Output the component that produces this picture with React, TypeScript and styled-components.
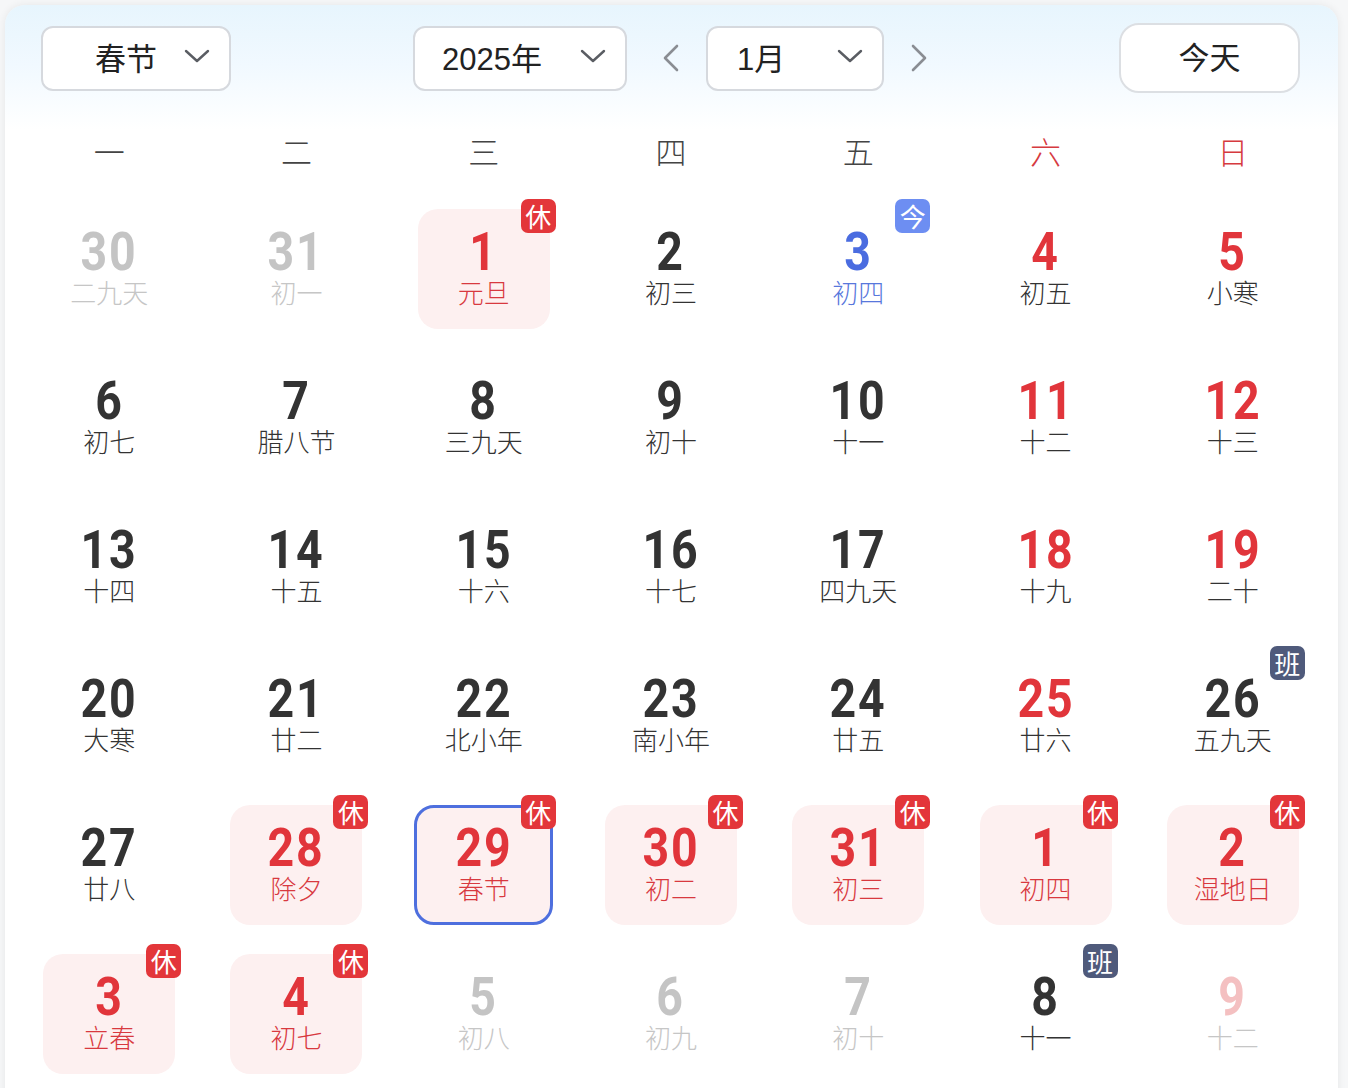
import React from "react";
import styled, { createGlobalStyle } from "styled-components";

const GlobalStyle = createGlobalStyle`
  html, body { margin: 0; padding: 0; background: #f6f7f8; }
  body { font-family: "Liberation Sans", "Noto Sans CJK SC", sans-serif; }
  * { box-sizing: border-box; }
`;

const Card = styled.div`
  margin: 5px 10px 0 5px;
  height: 1100px;
  border-radius: 20px 20px 0 0;
  background: linear-gradient(180deg, #e7f5fd 0px, #f1f9ff 60px, #ffffff 125px);
  box-shadow: 0 0 8px rgba(0, 0, 0, 0.07);
  padding-top: 18px;
  overflow: hidden;
`;

const Toolbar = styled.div`
  display: flex;
  align-items: center;
  height: 70px;
  padding: 0 38px 0 36px;
`;

const Select = styled.div<{ $w: number; $pl: number }>`
  display: flex;
  align-items: center;
  justify-content: space-between;
  width: ${(p) => p.$w}px;
  height: 65px;
  padding: 0 19px 4px ${(p) => p.$pl}px;
  background: #fff;
  border: 2px solid #d6d9de;
  border-radius: 12px;
  font-size: 31px;
  color: #222;
`;

const CenterGroup = styled.div`
  display: flex;
  align-items: center;
  margin-left: 182px;
`;

const ArrowBtn = styled.div<{ $ml: number }>`
  width: 30px;
  height: 40px;
  display: flex;
  align-items: center;
  justify-content: center;
  margin: 0 20px 0 ${(p) => p.$ml}px;
`;

const TodayBtn = styled.div`
  margin-left: auto;
  width: 181px;
  height: 70px;
  display: flex;
  align-items: center;
  justify-content: center;
  padding-bottom: 5px;
  background: #fff;
  border: 2px solid #dcdfe3;
  border-radius: 20px;
  font-size: 31px;
  color: #222;
`;

const WeekHeader = styled.div`
  display: grid;
  grid-template-columns: repeat(7, 1fr);
  height: 40px;
  margin-top: 35px;
  padding: 0 11.5px 0 10.5px;
`;

const WeekLabel = styled.div<{ $red: boolean }>`
  display: flex;
  align-items: center;
  justify-content: center;
  font-family: "Noto Sans CJK SC", sans-serif;
  font-weight: 300;
  font-size: 31px;
  color: ${(p) => (p.$red ? "#d63a3f" : "#444")};
`;

const Grid = styled.div`
  display: grid;
  grid-template-columns: repeat(7, 1fr);
  grid-auto-rows: 120px;
  row-gap: 29px;
  margin-top: 41px;
  padding: 0 11.5px 0 10.5px;
`;

const Slot = styled.div`
  position: relative;
  display: flex;
  justify-content: center;
`;

const Cell = styled.div<{ $holiday: boolean; $selected: boolean }>`
  width: ${(p) => (p.$selected ? 139 : 132)}px;
  height: 120px;
  display: flex;
  flex-direction: column;
  align-items: center;
  padding-top: ${(p) => (p.$selected ? 12 : 15)}px;
  border-radius: 20px;
  background: ${(p) => (p.$holiday ? "#fdf0f0" : "transparent")};
  border: ${(p) => (p.$selected ? "3px solid #4e6fde" : "none")};
`;

const DayNum = styled.div<{ $color: string }>`
  font-family: Roboto, "DejaVu Sans", sans-serif;
  font-weight: 700;
  font-size: 54px;
  line-height: 55px;
  height: 55px;
  letter-spacing: 2px;
  transform: scaleX(0.86);
  color: ${(p) => p.$color};
`;

const Lunar = styled.div<{ $color: string }>`
  font-family: "Liberation Sans", "Noto Sans CJK SC", sans-serif;
  font-weight: 300;
  font-size: 26px;
  line-height: 30px;
  color: ${(p) => p.$color};
`;

const Badge = styled.div<{ $bg: string }>`
  position: absolute;
  top: -10px;
  left: calc(50% + 37px);
  width: 35px;
  height: 34px;
  border-radius: 7px;
  background: ${(p) => p.$bg};
  color: #fff;
  font-family: "Noto Sans CJK SC", sans-serif;
  font-size: 26px;
  line-height: 33px;
  text-align: center;
`;

const Chevron = () => (
  <svg width="26" height="14" viewBox="0 0 26 14" fill="none">
    <path d="M2 2 L13 12 L24 2" stroke="#5a5d63" strokeWidth="2.4" strokeLinecap="round" strokeLinejoin="round" />
  </svg>
);

const Arrow = ({ dir }: { dir: "l" | "r" }) => (
  <svg width="18" height="28" viewBox="0 0 18 28" fill="none">
    <path
      d={dir === "l" ? "M15 2 L3 14 L15 26" : "M3 2 L15 14 L3 26"}
      stroke="#8a8d93"
      strokeWidth="2.6"
      strokeLinecap="round"
      strokeLinejoin="round"
    />
  </svg>
);

type Kind = "normal" | "weekend" | "other" | "otherWeekend" | "today" | "holiday";

interface Day {
  n: number;
  l: string;
  k: Kind;
  badge?: "休" | "今" | "班";
  sel?: boolean;
}

const days: Day[] = [
  { n: 30, l: "二九天", k: "other" },
  { n: 31, l: "初一", k: "other" },
  { n: 1, l: "元旦", k: "holiday", badge: "休" },
  { n: 2, l: "初三", k: "normal" },
  { n: 3, l: "初四", k: "today", badge: "今" },
  { n: 4, l: "初五", k: "weekend" },
  { n: 5, l: "小寒", k: "weekend" },

  { n: 6, l: "初七", k: "normal" },
  { n: 7, l: "腊八节", k: "normal" },
  { n: 8, l: "三九天", k: "normal" },
  { n: 9, l: "初十", k: "normal" },
  { n: 10, l: "十一", k: "normal" },
  { n: 11, l: "十二", k: "weekend" },
  { n: 12, l: "十三", k: "weekend" },

  { n: 13, l: "十四", k: "normal" },
  { n: 14, l: "十五", k: "normal" },
  { n: 15, l: "十六", k: "normal" },
  { n: 16, l: "十七", k: "normal" },
  { n: 17, l: "四九天", k: "normal" },
  { n: 18, l: "十九", k: "weekend" },
  { n: 19, l: "二十", k: "weekend" },

  { n: 20, l: "大寒", k: "normal" },
  { n: 21, l: "廿二", k: "normal" },
  { n: 22, l: "北小年", k: "normal" },
  { n: 23, l: "南小年", k: "normal" },
  { n: 24, l: "廿五", k: "normal" },
  { n: 25, l: "廿六", k: "weekend" },
  { n: 26, l: "五九天", k: "normal", badge: "班" },

  { n: 27, l: "廿八", k: "normal" },
  { n: 28, l: "除夕", k: "holiday", badge: "休" },
  { n: 29, l: "春节", k: "holiday", badge: "休", sel: true },
  { n: 30, l: "初二", k: "holiday", badge: "休" },
  { n: 31, l: "初三", k: "holiday", badge: "休" },
  { n: 1, l: "初四", k: "holiday", badge: "休" },
  { n: 2, l: "湿地日", k: "holiday", badge: "休" },

  { n: 3, l: "立春", k: "holiday", badge: "休" },
  { n: 4, l: "初七", k: "holiday", badge: "休" },
  { n: 5, l: "初八", k: "other" },
  { n: 6, l: "初九", k: "other" },
  { n: 7, l: "初十", k: "other" },
  { n: 8, l: "十一", k: "normal", badge: "班" },
  { n: 9, l: "十二", k: "otherWeekend" },
];

const numColor: Record<Kind, string> = {
  normal: "#333333",
  weekend: "#e1353b",
  other: "#c4c4c4",
  otherWeekend: "#f4c0c1",
  today: "#4a6ce0",
  holiday: "#e1353b",
};

const lunarColor: Record<Kind, string> = {
  normal: "#333333",
  weekend: "#333333",
  other: "#c6c6c6",
  otherWeekend: "#c6c6c6",
  today: "#5877dc",
  holiday: "#d8393f",
};

const badgeColor: Record<string, string> = {
  休: "#e3363a",
  今: "#6d8ef2",
  班: "#4f5a7b",
};

const weekdays = ["一", "二", "三", "四", "五", "六", "日"];

export default function App() {
  return (
    <>
      <GlobalStyle />
      <Card>
        <Toolbar>
          <Select $w={190} $pl={52}>
            <span>春节</span>
            <Chevron />
          </Select>
          <CenterGroup>
            <Select $w={214} $pl={27}>
              <span>2025年</span>
              <Chevron />
            </Select>
            <ArrowBtn $ml={29}>
              <Arrow dir="l" />
            </ArrowBtn>
            <Select $w={178} $pl={29}>
              <span>1月</span>
              <Chevron />
            </Select>
            <ArrowBtn $ml={20}>
              <Arrow dir="r" />
            </ArrowBtn>
          </CenterGroup>
          <TodayBtn>今天</TodayBtn>
        </Toolbar>
        <WeekHeader>
          {weekdays.map((w, i) => (
            <WeekLabel key={w} $red={i >= 5}>
              {w}
            </WeekLabel>
          ))}
        </WeekHeader>
        <Grid>
          {days.map((d, i) => (
            <Slot key={i}>
              <Cell $holiday={d.k === "holiday"} $selected={!!d.sel}>
                <DayNum $color={numColor[d.k]}>{d.n}</DayNum>
                <Lunar $color={lunarColor[d.k]}>{d.l}</Lunar>
              </Cell>
              {d.badge && <Badge $bg={badgeColor[d.badge]}>{d.badge}</Badge>}
            </Slot>
          ))}
        </Grid>
      </Card>
    </>
  );
}
